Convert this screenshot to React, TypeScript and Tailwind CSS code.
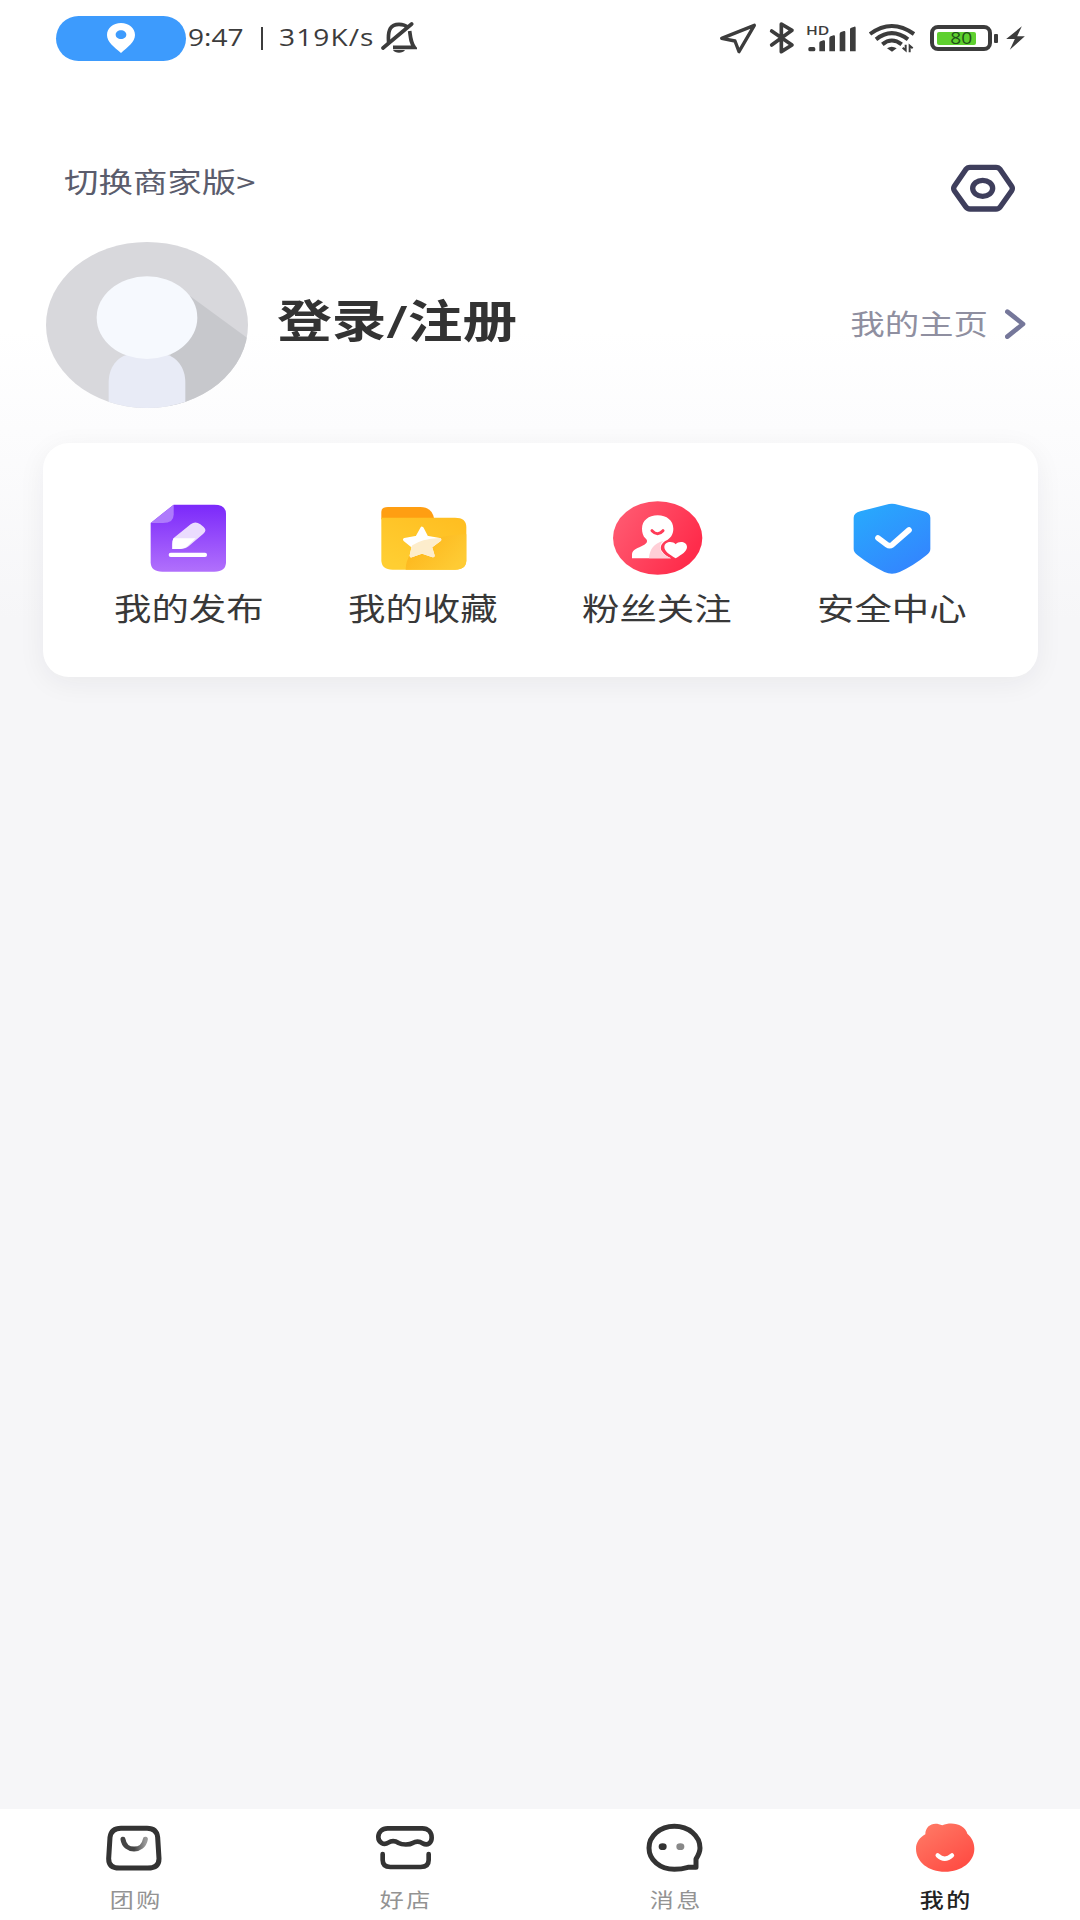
import type { ReactNode } from 'react';

function StatusBar() {
  return (
    <div className="flex h-[76px] items-center pl-14 text-[#3c3c3c]">
      <div className="flex h-[45px] w-[130px] items-center justify-center rounded-full bg-[#3d9bfd]">
        <svg className="h-[30px] w-[28px]" viewBox="0 0 84 90" fill="#fff">
          <path
            fillRule="evenodd"
            d="M42 0C18 0 0 16 0 36c0 21 22 36 42 54 20-18 42-33 42-54C84 16 66 0 42 0Zm0 22c9 0 16 6 16 13s-7 13-16 13-16-6-16-13 7-13 16-13Z"
          />
        </svg>
      </div>
      <span className="-mt-[2px] ml-[2px] w-[66px] origin-left scale-x-[1.22] text-[23px] whitespace-pre">9:47</span>
      <span className="ml-[7px] h-[23px] w-[2px] bg-[#3c3c3c]" />
      <span className="-mt-[2px] ml-[16px] w-[94px] origin-left scale-x-[1.22] text-[23px] whitespace-pre tracking-[0.9px]">319K/s</span>
      <svg className="ml-[8px] h-[34px] w-[36px]" viewBox="1024 66 108 102" fill="none" stroke="#3c3c3c" strokeWidth="11">
        <path d="M1047 132c-4-44 8-56 31-56 12 0 20 3 26 9M1110 96c3 24 4 36 14 49h-64" />
        <path d="m1030 147 86-72" strokeLinecap="round" />
        <path d="M1060 153h36c-6 11-30 11-36 0Z" fill="#3c3c3c" stroke="none" />
      </svg>

      <svg className="ml-[302px] h-[34px] w-[38px]" viewBox="56 66 114 102" fill="none" stroke="#3c3c3c" strokeWidth="10" strokeLinejoin="round">
        <path d="m64 118 98-39-46 79-12-32Z" />
      </svg>
      <svg className="ml-[12px] h-[34px] w-[26px]" viewBox="207 64 78 102" fill="none" stroke="#3c3c3c" strokeWidth="11" strokeLinejoin="round" strokeLinecap="round">
        <path d="m215 94 61 42-32 20V73l32 19-61 44" />
      </svg>
      <div className="relative ml-[11px] h-[28px] w-[50px]">
        <span className="absolute -top-[1px] left-0 origin-left scale-x-[1.26] text-[12.5px] leading-4 font-semibold">HD</span>
        <svg className="mt-[2px] h-[26px] w-[50px]" viewBox="318 78 150 78" fill="#3c3c3c">
          <rect x="325" y="141" width="21" height="13" rx="5" />
          <path d="M358 129q0-4 4-5l8-3q5-1 5 4v29h-17ZM388 115q0-4 4-6l9-3q4-1 4 4v44h-17ZM419 102q0-4 4-6l9-3q4-1 4 4v57h-17ZM450 88q0-4 4-5l9-3q4-1 4 4v70h-17Z" />
        </svg>
      </div>
      <svg className="ml-[12px] h-[30px] w-[48px]" viewBox="504 72 144 90" fill="none" stroke="#3c3c3c" strokeWidth="12">
        <path d="M510 105q65-48 132 0M528 121q47-37 96 0M547 136q28-23 58 0" />
        <path d="M561 148q14-10 29 0l-14 10Z" fill="#3c3c3c" stroke="none" />
        <path d="M617 137v17l-9-8M629 160v-20l9 8" strokeWidth="6" />
      </svg>
      <div className="ml-[14px] flex h-[26px] w-[62px] items-center rounded-[8px] border-[4px] border-[#3c3c3c] pl-[3px]">
        <div className="flex h-[13px] w-[39px] items-center justify-center rounded-[2px] bg-[#5fd02f]">
          <span className="ml-[9px] scale-x-[1.2] text-[16px] leading-none text-[#22501a]">80</span>
        </div>
      </div>
      <span className="ml-[2px] h-[9px] w-[4px] rounded-[1px] bg-[#3c3c3c]" />
      <svg className="ml-[8px] h-[24px] w-[19px]" viewBox="918 80 56 72" fill="#3c3c3c">
        <path d="m965 81-47 38h26l-15 32 45-40h-23Z" />
      </svg>
    </div>
  );
}

function Avatar() {
  return (
    <svg className="h-[166px] w-[202px] shrink-0" viewBox="48 306 606 498">
      <clipPath id="avatar">
        <ellipse cx="351" cy="555" rx="303" ry="249" />
      </clipPath>
      <g clipPath="url(#avatar)">
        <path fill="#d8d8dc" d="M48 306h606v498H48Z" />
        <path fill="#c7c8cc" d="m480 468 180 132v210H420V650Z" />
        <path fill="#e8ebf6" d="M236 810v-82c0-45 25-80 66-86h98c41 6 66 41 66 86v82Z" />
        <ellipse cx="351" cy="533" rx="151" ry="124" fill="#f6f9fe" />
      </g>
    </svg>
  );
}

function PublishIcon() {
  return (
    <svg className="h-[74px] w-[90px]" viewBox="132 60 270 222">
      <linearGradient id="publish" x1="0" y1="0" x2="0" y2="1">
        <stop stopColor="#7b29fa" />
        <stop offset="1" stopColor="#b170fc" />
      </linearGradient>
      <path fill="url(#publish)" d="M221 71h122q35 0 35 28v145q0 28-35 28H187q-35 0-35-28V126Z" />
      <path fill="#ae7bfc" d="M221 71v30q0 25-32 25h-37Z" />
      <path fill="#ebdcfe" d="m222 170 50-40q14-11 29 0l10 8q11 10-1 20l-44 38q-8 8-22 8h-27v-14q0-12 5-20Z" />
      <path fill="#fff" d="m220 172 67 0-25 24q-8 8-22 8h-23v-14q0-12 3-18Z" />
      <rect fill="#fff" x="206" y="215" width="115" height="13" rx="6" />
    </svg>
  );
}

function FavoriteIcon() {
  return (
    <svg className="h-[74px] w-[90px]" viewBox="836 60 270 222">
      <linearGradient id="favorite" x1="1" y1="0" x2="0.3" y2="1">
        <stop stopColor="#ffbd20" />
        <stop offset="1" stopColor="#ffce32" />
      </linearGradient>
      <linearGradient id="fold" x1="0" y1="0" x2="1" y2="0.6">
        <stop stopColor="#fdb116" />
        <stop offset="1" stopColor="#fecb34" />
      </linearGradient>
      <path fill="#ff9e12" d="M846 115V92q0-14 20-14h97q36 0 42 37Z" />
      <path fill="url(#favorite)" d="M846 110h221q34 0 34 28v100q0 28-34 28H880q-34 0-34-28Z" />
      <path fill="url(#fold)" d="M919 266c0-70 80-105 182-106v78q0 28-34 28Z" />
      <path
        fill="#fff"
        stroke="#fff"
        strokeWidth="10"
        strokeLinejoin="round"
        d="m968 142 14 27 39 7-28 21 8 27-33-11-32 11 6-27-26-21 37-7Z"
      />
      <path fill="#fdedcc" stroke="#fdedcc" strokeWidth="10" strokeLinejoin="round" d="m1021 176-28 21 8 27-33-11-32 11 6-27q25-18 79-21Z" />
    </svg>
  );
}

function FansIcon() {
  return (
    <svg className="h-[74px] w-[90px]" viewBox="159 62 270 222">
      <linearGradient id="fans" x1="0" y1="0" x2="1" y2="0.5">
        <stop stopColor="#ff5f75" />
        <stop offset="1" stopColor="#ff2c4b" />
      </linearGradient>
      <ellipse cx="293" cy="173" rx="134" ry="110" fill="url(#fans)" />
      <path
        fill="#fff"
        d="M293 105c27 0 47 16 47 40 0 17-9 30-23 36-13 8-19 20-11 32 7 10 14 15 27 21H216v-12c0-14 19-19 34-27 13-7 14-14 6-21-7-7-10-18-10-29 0-24 20-40 47-40Z"
      />
      <path fill="#ffcfd7" d="M267 234c2-27 14-45 43-52-10 9-13 20-6 31 6 10 15 15 29 21Z" />
      <path d="M276 151q17 18 33 0" fill="none" stroke="#ff3b57" strokeWidth="9" strokeLinecap="round" />
      <path fill="#fff" d="M347 234c-18-11-34-21-34-34 0-17 25-20 34-8 9-12 34-9 34 8 0 13-16 23-34 34Z" />
    </svg>
  );
}

function SecurityIcon() {
  return (
    <svg className="h-[74px] w-[90px]" viewBox="862 62 270 222">
      <linearGradient id="security" x1="0" y1="0" x2="0.7" y2="1">
        <stop stopColor="#27acfd" />
        <stop offset="1" stopColor="#3385fe" />
      </linearGradient>
      <path
        fill="url(#security)"
        d="M979 73q18-6 36 0l77 20q20 5 20 19v94q0 10-12 19-38 31-80 50-23 10-46 0-42-20-80-50-12-9-12-19v-94q0-14 20-19Z"
      />
      <path d="m955 173 27 20q8 6 16 0l50-44" fill="none" stroke="#fff" strokeWidth="17" strokeLinecap="round" strokeLinejoin="round" />
    </svg>
  );
}

function DealIcon() {
  return (
    <svg className="h-[50px] w-[60px]" viewBox="75 69 180 150" fill="none" stroke="#333" strokeWidth="15">
      <linearGradient id="smile" x1="0" y1="0" x2="1" y2="0">
        <stop offset="0.5" stopColor="#444" />
        <stop offset="1" stopColor="#999" />
      </linearGradient>
      <path d="M123 85h78q29 0 32 27l4 64q0 28-34 28h-85q-32 0-32-28l4-64q4-27 33-27Z" />
      <path d="M129 118c6 39 60 39 67 0" stroke="url(#smile)" strokeLinecap="round" />
    </svg>
  );
}

function ShopIcon() {
  return (
    <svg className="h-[50px] w-[60px]" viewBox="885 69 180 150" fill="none" stroke="#333" strokeWidth="14" strokeLinecap="round">
      <path d="M923 85h104c17 0 28 12 28 28s-12 25-27 17c-10-7-20-7-30-1-9 6-32 6-42 0-11-7-22-7-31-1-14 9-30-1-30-17 0-14 11-26 28-26ZM908 162v18q0 21 23 21h91q24 0 24-21v-18" />
    </svg>
  );
}

function MessageIcon() {
  return (
    <svg className="h-[50px] w-[60px]" viewBox="75 69 180 150">
      <path
        d="M163 79c43 0 77 28 77 65 0 14-7 25-12 33v25h-24c-13 4-25 6-41 6-43 0-76-28-76-64s33-65 76-65Z"
        fill="none"
        stroke="#333"
        strokeWidth="15"
        strokeLinejoin="round"
      />
      <ellipse cx="128" cy="140" rx="12" ry="10" fill="#333" />
      <ellipse cx="181" cy="140" rx="12" ry="10" fill="#888" />
    </svg>
  );
}

function MineIcon() {
  return (
    <svg className="h-[50px] w-[60px]" viewBox="885 69 180 150">
      <linearGradient id="mine" x1="0" y1="0" x2="0.8" y2="1">
        <stop stopColor="#ff7d68" />
        <stop offset="1" stopColor="#ff4a42" />
      </linearGradient>
      <path
        fill="url(#mine)"
        d="M967 76c30-14 69-1 75 25 13 11 21 26 21 45 0 39-38 69-88 69s-87-30-87-69c0-19 11-33 28-43 0-27 25-40 51-27Z"
      />
      <path d="M953 166q21 20 43 0" fill="none" stroke="#fff" strokeWidth="13" strokeLinecap="round" />
    </svg>
  );
}

const shortcuts: { label: string; icon: ReactNode }[] = [
  { label: '我的发布', icon: <PublishIcon /> },
  { label: '我的收藏', icon: <FavoriteIcon /> },
  { label: '粉丝关注', icon: <FansIcon /> },
  { label: '安全中心', icon: <SecurityIcon /> },
];

const tabs: { label: string; icon: ReactNode; active?: boolean }[] = [
  { label: '团购', icon: <DealIcon /> },
  { label: '好店', icon: <ShopIcon /> },
  { label: '消息', icon: <MessageIcon /> },
  { label: '我的', icon: <MineIcon />, active: true },
];

export default function App() {
  return (
    <div className="flex h-[1920px] w-[1080px] flex-col overflow-hidden bg-[#f6f6f8] font-['Open_Sans','Noto_Sans_CJK_SC',sans-serif]">
      <div className="flex flex-1 flex-col bg-[linear-gradient(180deg,#fff_0,#fff_330px,#fcfcfd_430px,#f6f6f8_620px)]">
        <StatusBar />

        <header className="mt-[84px] flex h-[56px] items-center justify-between pr-[65px] pl-[64px]">
          <span className="-mt-[14px] origin-left scale-x-[1.23] font-['Noto_Sans_CJK_SC',sans-serif] text-[28px] text-[#5a5c6c]">
            切换商家版&gt;
          </span>
          <svg className="h-[48px] w-[64px]" viewBox="392 71 192 144" fill="none" stroke="#3e3e5c" strokeWidth="16" strokeLinejoin="round">
            <path d="M449 81h78q8 0 13 7l34 50q4 6 0 13l-34 48q-5 7-13 7h-78q-8 0-13-7l-34-48q-4-7 0-13l34-50q5-7 13-7Z" />
            <ellipse cx="487" cy="144" rx="30" ry="24" />
          </svg>
        </header>

        <section className="mt-[26px] flex h-[166px] items-center pr-[54px] pl-[46px] font-['Noto_Sans_CJK_SC',sans-serif]">
          <Avatar />
          <h1 className="-mt-[11px] ml-[29px] origin-left scale-x-[1.215] text-[45px] leading-none font-bold text-[#333]">
            登录<span className="font-['Open_Sans',sans-serif] font-semibold">/</span>注册
          </h1>
          <span className="-mt-[5px] ml-auto origin-right scale-x-[1.23] text-[28px] leading-none text-[#8f8fa0]">我的主页</span>
          <svg className="-mt-[3px] ml-[17px] h-[30px] w-[21px]" viewBox="554 504 63 90" fill="none" stroke="#75779a" strokeWidth="14" strokeLinecap="round" strokeLinejoin="round">
            <path d="m561 512 47 37-47 38" />
          </svg>
        </section>

        <section className="mx-[43px] mt-[35px] grid h-[234px] w-[995px] grid-cols-4 rounded-[26px] bg-white px-[29px] pt-[58px] shadow-[0_6px_28px_rgba(40,40,50,0.06)]">
          {shortcuts.map((item) => (
            <div key={item.label} className="flex flex-col items-center">
              {item.icon}
              <span className="mt-[12px] -ml-[1px] scale-x-[1.23] font-['Noto_Sans_CJK_SC',sans-serif] text-[30.4px] leading-[40px] whitespace-nowrap text-[#383838]">
                {item.label}
              </span>
            </div>
          ))}
        </section>
      </div>

      <nav className="grid h-[111px] grid-cols-4 bg-white">
        {tabs.map((tab) => (
          <div key={tab.label} className="flex flex-col items-center pt-[14px]">
            {tab.icon}
            <span
              className={`mt-[14px] scale-x-[1.2] pl-[2px] font-['Noto_Sans_CJK_SC',sans-serif] text-[20px] leading-[26px] tracking-[2px] ${
                tab.active ? 'font-medium text-[#222]' : 'text-[#939393]'
              }`}
            >
              {tab.label}
            </span>
          </div>
        ))}
      </nav>
    </div>
  );
}
